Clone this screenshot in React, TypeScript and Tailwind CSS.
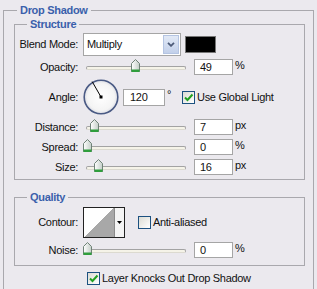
import React from "react";

type SliderRow = { label: string; pos: number; value: string; unit: string };

const structureSliders: SliderRow[] = [
  { label: "Distance:", pos: 11, value: "7", unit: "px" },
  { label: "Spread:", pos: 4, value: "0", unit: "%" },
  { label: "Size:", pos: 15, value: "16", unit: "px" },
];

function Thumb() {
  return (
    <svg width="9" height="13" viewBox="0 0 9 13" className="block">
      <defs>
        <linearGradient id="thumbFill" x1="0" y1="0" x2="1" y2="0">
          <stop offset="0" stopColor="#ffffff" />
          <stop offset="1" stopColor="#c4cec8" />
        </linearGradient>
      </defs>
      <path d="M0.5 4.5 L4.5 0.5 L8.5 4.5 V12.5 H0.5 Z" fill="url(#thumbFill)" stroke="#6f8277" />
      <rect x="0.5" y="10.5" width="8" height="2.5" fill="#2f9e3c" />
    </svg>
  );
}

function Slider({ pos }: { pos: number }) {
  return (
    <div className="relative ml-[5px] flex h-[20px] w-[106px] shrink-0 items-center">
      <div className="ml-[3px] mt-[2px] h-[4px] w-[100px] rounded-full border border-[#a3a3a3] border-b-[#dcdad0] bg-[#f5f3e8]" />
      <div className="absolute top-[2px]" style={{ left: pos - 4.5 }}>
        <Thumb />
      </div>
    </div>
  );
}

function NumBox({ value, className = "w-[39px] pl-[5px]" }: { value: string; className?: string }) {
  return (
    <div className={`flex h-[16px] shrink-0 items-center border border-[#a5a5a5] bg-white ${className}`}>
      {value}
    </div>
  );
}

function Check({ checked }: { checked?: boolean }) {
  return (
    <span className="flex h-[13px] w-[13px] shrink-0 items-center justify-center border border-[#1c5180] bg-linear-to-br from-[#dcdcd4] to-white">
      {checked && (
        <svg width="11" height="11" viewBox="0 0 11 11">
          <path d="M2 5.5 L4.5 8 L9.5 2.5" stroke="#21a121" strokeWidth="2" fill="none" />
        </svg>
      )}
    </span>
  );
}

function Label({ children }: { children: React.ReactNode }) {
  return <span className="w-[63px] shrink-0 text-right">{children}</span>;
}

function Unit({ children }: { children: React.ReactNode }) {
  return <span className="mb-[4px] ml-[2px]">{children}</span>;
}

function SliderLine({ row }: { row: SliderRow }) {
  return (
    <div className="flex h-[20px] items-center">
      <Label>{row.label}</Label>
      <Slider pos={row.pos} />
      <div className="ml-[5px]">
        <NumBox value={row.value} />
      </div>
      <Unit>{row.unit}</Unit>
    </div>
  );
}

function Dial() {
  return (
    <svg width="36" height="36" viewBox="0 0 36 36" className="ml-[5px] block shrink-0">
      <defs>
        <radialGradient id="dialFill" cx="0.5" cy="0.5" r="0.5">
          <stop offset="0" stopColor="#ffffff" />
          <stop offset="0.8" stopColor="#f4f4f4" />
          <stop offset="1" stopColor="#dcdde4" />
        </radialGradient>
      </defs>
      <circle cx="18" cy="18" r="16.8" fill="url(#dialFill)" stroke="#4a5a84" strokeWidth="1.6" />
      <line x1="18" y1="18" x2="9.2" y2="2.6" stroke="#000" strokeWidth="1" />
      <rect x="16.5" y="16.5" width="3" height="3" fill="#000" />
    </svg>
  );
}

const legendCls = "font-bold leading-[14px] text-[#3a5fab] px-[3px]";

export default function App() {
  return (
    <div className="h-[289px] w-[317px] overflow-hidden bg-[#ebe9ee] pl-[3px] pt-[3px] font-['Liberation_Sans',Arial,sans-serif] text-[11px] tracking-[-0.3px] text-[#111]">
      <fieldset className="w-[311px] border border-[#a9a8ad] pb-[20px] pl-[10px]">
        <legend className={`ml-[3px] ${legendCls}`}>Drop Shadow</legend>

        <fieldset className="w-[291px] border border-[#a9a8ad] pb-[2px]">
          <legend className={`ml-[12px] ${legendCls}`}>Structure</legend>

          <div className="flex h-[26px] items-center">
            <Label>Blend Mode:</Label>
            <div className="ml-[5px] flex h-[23px] w-[98px] items-center border border-[#a5a5a5] bg-white pl-[3px]">
              <span>Multiply</span>
              <span className="ml-auto mr-[1px] flex h-[19px] w-[16px] items-center justify-center border border-[#b4c4e2] bg-linear-to-b from-[#e2e9f6] to-[#c2d0ea]">
                <svg width="8" height="5" viewBox="0 0 8 5">
                  <path d="M1 0.8 L4 3.8 L7 0.8" stroke="#4c5a78" strokeWidth="1.8" fill="none" />
                </svg>
              </span>
            </div>
            <span className="ml-[4px] h-[17px] w-[31px] border border-[#777] bg-black" />
          </div>

          <div className="flex h-[20px] items-center">
            <Label>Opacity:</Label>
            <Slider pos={52} />
            <div className="ml-[5px]">
              <NumBox value="49" />
            </div>
            <Unit>%</Unit>
          </div>

          <div className="flex h-[40px] items-center">
            <Label>Angle:</Label>
            <Dial />
            <div className="ml-[4px]">
              <NumBox value="120" className="h-[17px] w-[42px] pl-[6px]" />
            </div>
            <span className="mb-[6px] ml-[2px] w-[15px]">°</span>
            <Check checked />
            <span className="ml-[2px]">Use Global Light</span>
          </div>

          {structureSliders.map((row) => (
            <SliderLine key={row.label} row={row} />
          ))}
        </fieldset>

        <fieldset className="mt-[10px] w-[291px] border border-[#a9a8ad] pb-[5px]">
          <legend className={`ml-[12px] ${legendCls}`}>Quality</legend>

          <div className="mt-[3px] flex h-[31px] items-center">
            <Label>Contour:</Label>
            <div className="ml-[5px] flex h-[31px] w-[42px] border border-[#222] bg-white">
              <svg width="30" height="29" viewBox="0 0 30 29" className="block">
                <polygon points="0,29 30,0 30,29" fill="#a8a8a8" shapeRendering="crispEdges" />
              </svg>
              <div className="flex flex-1 items-center justify-center border-l border-[#8a8a8a] bg-[#f4f4f4]">
                <svg width="5" height="3" viewBox="0 0 5 3">
                  <polygon points="0,0 5,0 2.5,3" fill="#000" />
                </svg>
              </div>
            </div>
            <span className="ml-[13px]">
              <Check />
            </span>
            <span className="ml-[2px]">Anti-aliased</span>
          </div>

          <div className="mt-[2px]">
            <SliderLine row={{ label: "Noise:", pos: 4, value: "0", unit: "%" }} />
          </div>
        </fieldset>

        <div className="ml-[73px] mt-[6px] flex h-[13px] items-center">
          <Check checked />
          <span className="ml-[2px]">Layer Knocks Out Drop Shadow</span>
        </div>
      </fieldset>
    </div>
  );
}
